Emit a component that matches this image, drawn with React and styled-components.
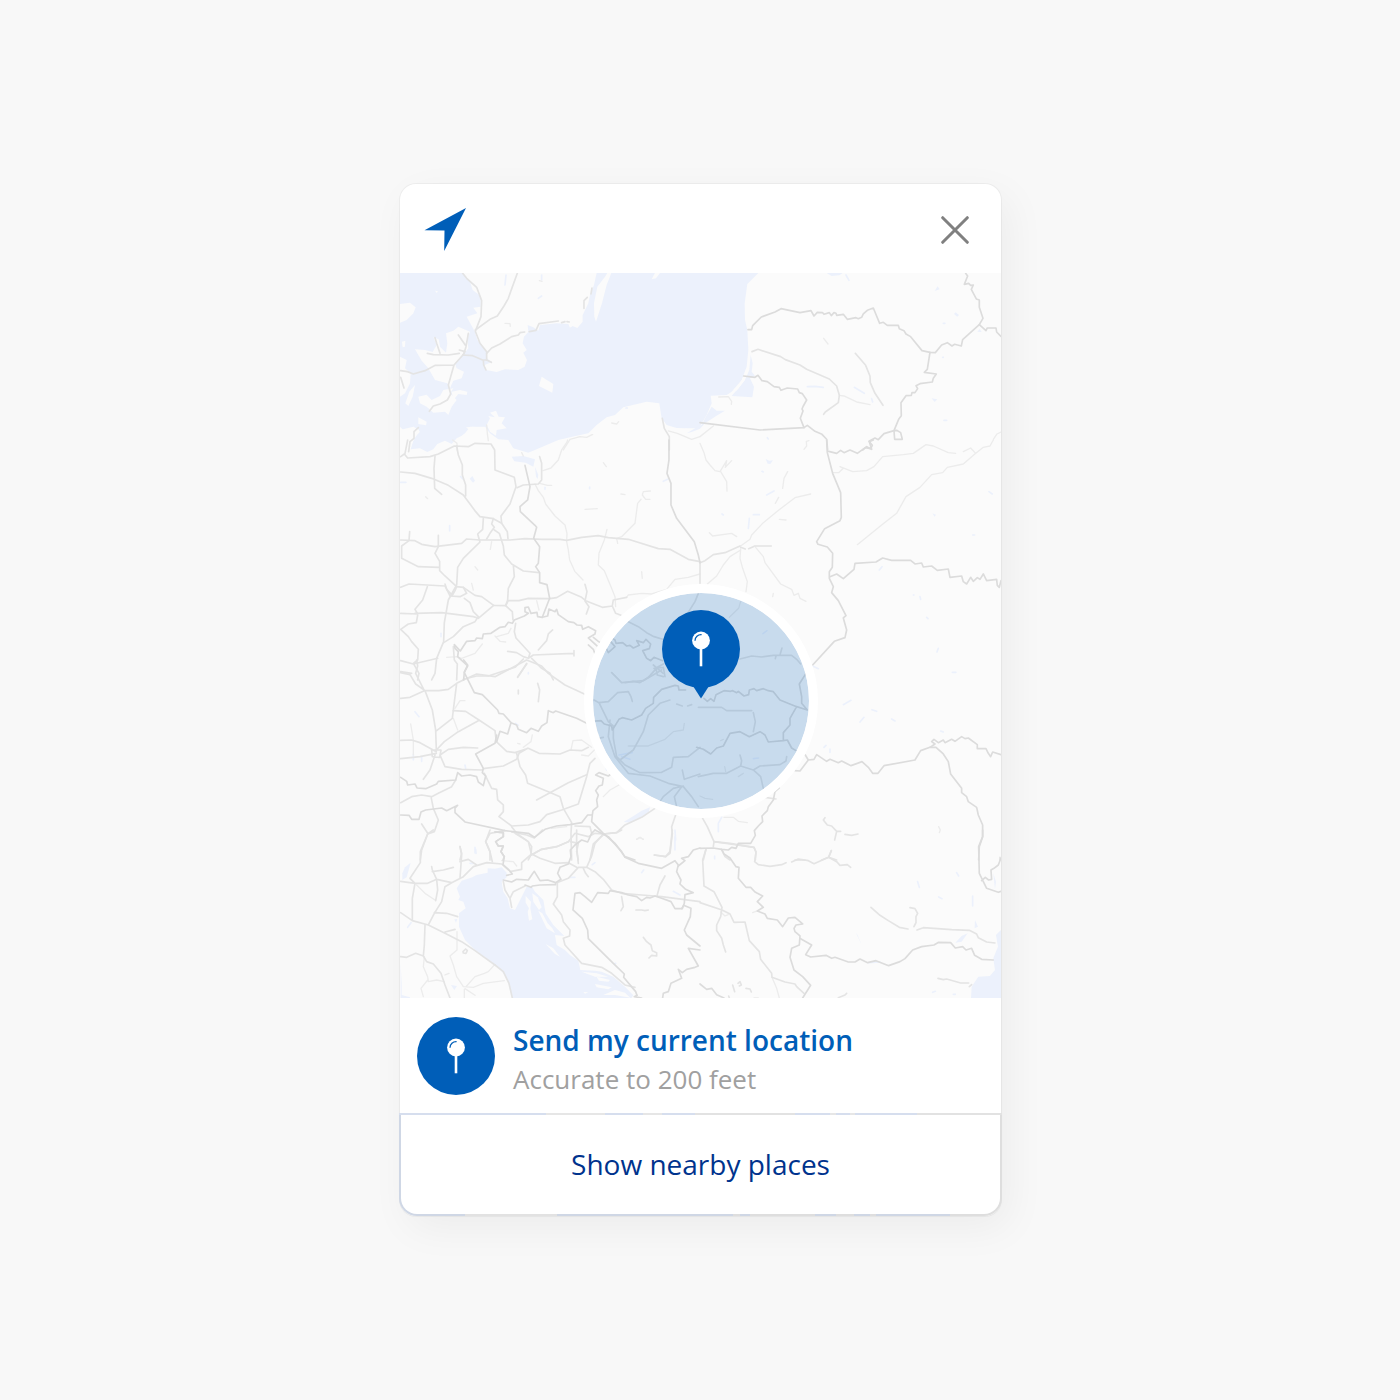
import React from 'react';
import styled, { createGlobalStyle } from 'styled-components';

const GlobalStyle = createGlobalStyle`
  * {
    box-sizing: border-box;
  }

  body {
    margin: 0;
    background: #f8f8f8;
    font-family: "Open Sans", "Noto Sans", sans-serif;
  }

  button {
    border: 0;
    padding: 0;
    background: none;
    font: inherit;
    cursor: pointer;
  }
`;

const Page = styled.div`
  display: flex;
  align-items: center;
  justify-content: center;
  min-height: 100vh;
  padding: 24px 24px 24px 25px;
`;

const Card = styled.main`
  width: 100%;
  max-width: 601px;
  border-radius: 16px;
  background: #fff;
  box-shadow: 0 0 0 1px rgba(0, 0, 0, 0.04), 8px 12px 40px rgba(0, 0, 0, 0.05);
`;

const Header = styled.header`
  display: flex;
  align-items: center;
  justify-content: space-between;
  padding: 24px 32px 22px 24px;
`;

const ArrowIcon = styled.svg`
  display: block;
  width: 43px;
  height: 43px;
  fill: #005eb8;
`;

const CloseButton = styled.button`
  width: 28px;
  height: 28px;

  svg {
    display: block;
    stroke: #808080;
    stroke-width: 3;
    stroke-linecap: round;
  }
`;

const MapArea = styled.section`
  position: relative;
  background: #fbfbfb;
`;

const MapDrawing = styled.svg`
  display: block;
  width: 100%;
  height: auto;
  fill: none;
  stroke-linejoin: round;
  stroke-linecap: round;

  .water {
    fill: #ecf1fc;
  }

  .land {
    fill: #fbfbfb;
  }

  .border {
    stroke: #dcdcdc;
    stroke-width: 5;
  }

  .road {
    stroke: #e4e4e4;
    stroke-width: 5;
  }

  .minor {
    stroke: #ececec;
    stroke-width: 4;
  }

  .stream {
    stroke: #ecf1fc;
    stroke-width: 5;
  }
`;

const Accuracy = styled.div`
  position: absolute;
  top: 59%;
  left: 50%;
  display: flex;
  justify-content: center;
  width: 234px;
  height: 234px;
  padding-top: 17px;
  border: 9px solid #fff;
  border-radius: 50%;
  background: rgba(0, 94, 184, 0.2);
  background-clip: padding-box;
  transform: translate(-50%, -50%);
`;

const Badge = styled.svg`
  display: block;
  flex: none;
  width: 78px;
  height: ${props => (props.$tail ? '89px' : '78px')};
`;

const LocationButton = styled.button`
  display: flex;
  align-items: center;
  gap: 18px;
  width: 100%;
  padding: 16px 17px 15px;
  text-align: left;
`;

const LocationText = styled.span`
  display: flex;
  flex-direction: column;
  padding-top: 6px;
`;

const Title = styled.span`
  color: #005eb8;
  font-size: 28px;
  font-weight: 600;
  line-height: 40px;
`;

const Subtitle = styled.span`
  color: #a0a0a0;
  font-size: 26px;
  line-height: 38px;
`;

const PlacesButton = styled.button`
  display: block;
  width: calc(100% + 2px);
  margin: 0 -1px;
  padding: 29px 16px 30px;
  border: 2px solid transparent;
  border-radius: 0 0 18px 18px;
  background:
    linear-gradient(#fff, #fff) padding-box,
    linear-gradient(90deg, #d6deee 147px, #e6e6e6 147px 206px, #d6deee 206px 244px, #e6e6e6 244px 263px, #d6deee 263px 296px, #e2e2e2 296px 396px, #d6deee 396px 431px, #e6e6e6 431px 437px, #d6deee 437px 451px, #e6e6e6 451px 456px, #d6deee 456px 518px, #e2e2e2 518px) top / 100% 2px no-repeat border-box,
    linear-gradient(90deg, #cfd7e5 66px, #e2e2e2 66px 158px, #cfd7e5 158px 334px, #dedede 334px 341px, #cfd7e5 341px 351px, #dedede 351px 416px, #cfd7e5 416px 437px, #dedede 437px 455px, #cfd7e5 455px 471px, #dedede 471px 477px, #cfd7e5 477px 551px, #dedede 551px) border-box;
  color: #00338d;
  font-size: 28px;
  line-height: 40px;
`;

// Each tile is drawn on a 3x grid and placed at x, y of the map.
const tiles = [
  {
    x: -10,
    y: -103,
    water: [
      'M30 309H220L240 335 248 360 272 378 272 410 250 413 262 430 230 440 254 484 262 510 288 542 292 566 306 576 284 585 288 600 320 606 345 598 385 600 404 590 411 570 400 548 410 540 398 520 402 500 415 486 413 465 430 472 445 482 450 465 500 460 535 462 540 473 548 468 562 474 578 455 578 435 595 400 600 375 612 345 620 309H930V775L890 775 860 774 830 765 815 745 808 700 770 695 700 712 675 735 650 742 620 765 595 790 560 797 505 810 440 838 415 848 370 835 355 810 325 808 300 790 285 770 250 770 228 772 238 780 220 795 200 805 185 822 165 812 142 822 130 838 112 846 90 835 62 838 72 805 90 785 70 770 30 780Z',
    ],
    land: [
      'M664 309L650 345 636 400 618 455 613 440 612 400 622 350 645 320 652 309Z',
      'M455 620L490 642 487 668 447 648Z',
      'M785 328L795 309H810L798 325Z',
      'M30 402L60 398 77 412 70 430 50 450 30 458Z',
      'M36 515L46 512 45 530 38 532Z',
      'M75 538L105 540 128 546 140 525 130 502 146 508 150 530 168 548 172 520 168 490 190 482 205 470 240 485 232 510 235 535 215 560 195 580 200 595 222 605 215 625 190 632 180 655 172 640 135 630 115 595 95 572Z',
      'M30 560L50 570 45 595 62 610 60 640 45 670 30 680Z',
      'M85 680L110 674 125 690 150 678 160 660 190 655 180 670 200 690 185 710 175 735 165 725 130 728 110 710 90 700Z',
      'M185 665L210 660 232 665 230 675 205 672 190 690Z',
      'M75 645L68 680 55 708 46 700 58 665Z',
      'M85 742L110 755 108 766 85 762Z',
      'M30 770L45 785 70 770 88 780 70 812 60 840H30Z',
      'M290 765L300 745 295 738 315 742 300 728 318 722 326 740 345 742 335 760 350 775 320 780 318 797 300 785Z',
      'M225 790L240 770 285 772 300 795 310 810H200Z',
      'M135 362L144 364 140 369Z',
    ],
    stream: ['M348 315L345 345', 'M445 385L455 378', 'M455 315V330', 'M708 714H712'],
    border: [],
    road: [
      'M218 310L230 325 260 352 275 392 273 440 256 484 270 520 290 545 290 570 304 577',
      'M382 310L362 365 355 385 342 408 322 438 300 448 256 480',
      'M290 550L305 534 330 522 365 500 385 495 390 488 404 486M418 485L438 481 447 461 505 453M515 458L525 455M531 455L538 456',
      'M218 555L248 557 278 570 290 570M280 570L281 585 288 600',
      'M32 602L52 605 70 612 105 602 136 586 192 585 218 556 225 545 208 540M192 585L175 645 182 672 172 690 150 702 130 708 118 724',
      'M32 622L42 654M85 773L72 785 72 805 60 815 56 845',
      'M112 550L130 554 175 555 208 550M135 503L140 520 150 550M235 490L228 530 222 550M205 495L228 528',
      'M606 354L603 372M592 382L582 392 582 415',
      'M817 745L823 775 838 800 838 840',
    ],
    minor: ['M345 460L360 461 361 469M448 332L456 334', 'M520 840L540 808 570 800 590 802 605 795M605 794H608M665 759L680 762 686 755M835 783L862 790 905 808 930 800', 'M290 765L292 790 295 812M188 810L201 820 201 840'],
  },
  {
    x: 300,
    y: -103,
    water: [
      'M-2 309H175L142 342 134 400 135 450 142 480 145 540 140 590 125 630 95 665 80 675 32 677 35 700 20 735 -2 772Z',
      'M152 555L158 580 155 605 165 618 150 625 162 650 157 682 95 678 115 655 135 630 148 600Z',
      'M0 776L15 745 35 710 50 722 75 722 45 740 15 760Z',
      'M-40 790L-10 772 10 762 0 776 -25 786Z',
      'M380 309H428L418 316 395 318Z',
      'M704 363L713 349 719 358Z',
      'M762 432L767 427 777 435 772 440Z',
      'M832 485L839 477 845 486Z',
      'M695 685L712 688 704 696Z',
    ],
    land: ['M134 615L120 640 100 660 110 662 133 632Z'],
    stream: ['M438 315L447 331', 'M322 650L345 649 370 652', 'M463 652L493 670', 'M515 686L518 696', 'M730 460H735M728 562H730M732 751H740M202 803L205 807'],
    border: [
      'M144 479H155L158 467 184 441 225 426 243 416 300 428 333 422 342 438 352 427 368 428 372 433 388 428 394 437 402 428 408 430 410 436 430 433 442 448 468 443 475 446 485 442 490 432 502 421 520 414 539 460 550 457 562 466 595 466 598 476 612 482 618 492 632 500 666 542 690 547 706 548 725 525 742 518 756 528 764 523 784 528 788 509 838 464 849 445 838 412 838 390 829 387 814 358 820 345 812 346 806 340 793 343 803 318 797 310',
      'M838 464L858 482 862 474 888 474 890 486 903 499',
      'M690 547L682 598 673 607 709 612 700 625 697 636 660 641 648 647 653 656 645 668 636 668 634 676 618 677 603 698 604 737 596 748 582 782 552 791 535 809 525 804 507 814 517 826 512 836 497 833 488 840',
      'M582 782L584 808 607 808 602 788 590 781Z',
      'M131 618L165 622 174 616 186 632 202 635 222 650 238 652 243 661 262 654 293 657 298 668 307 671 320 690 310 708 306 717 309 723 301 745 312 773 180 780 0 758',
      'M312 773L322 766 345 784 366 793 380 808 383 840',
    ],
    road: ['M156 545L174 538 242 560 256 569 300 585 320 598 388 627 410 648 418 676 415 698 376 726 371 733', 'M466 550L497 586 510 618 511 638 525 670 549 706'],
    minor: ['M418 676L432 678 470 696 510 704', 'M371 505L384 522', 'M56 681L85 680 95 694 94 703', 'M0 800L40 768M327 812L319 814 320 828 312 838M903 786L891 792 880 808'],
  },
  {
    x: -5,
    y: 167,
    water: ['M350 50L385 48 420 58 415 80 392 68 358 64Z', 'M224 116L232 108 240 122 234 128Z', 'M420 80L430 105 428 117 423 110Z'],
    land: [],
    stream: ['M17 127H33M197 110L205 118', 'M164 257V273', 'M450 142V148M584 141V146M805 124L818 118', 'M138 580V590'],
    border: [
      'M390 76L405 140 398 180 375 200 376 215 420 256 425 262 416 295 434 320 430 370 422 380 434 398 434 428 456 434 464 475 442 532 428 530 426 517 408 520 400 501 390 503 390 515 400 520 388 528 358 540 352 550 340 547 330 560 315 562 288 580 265 582 262 596 245 594 240 602 215 604 196 633 178 614 180 625 190 635 188 650 218 678 208 696 206 720',
      'M442 532L458 528 462 507 480 515 485 508 490 524 520 545 537 548 546 555 560 556 563 568 580 560 602 572 600 582 580 594 606 618',
      'M822 0L822 60 816 100 828 130 828 195 845 235 898 305 910 345 915 368',
    ],
    road: [
      'M17 50L28 42 38 54 105 50 130 42 178 18 220 20 240 10 288 12 299 30 300 90 358 112 363 140 345 192 318 228 320 250 337 275 339 296',
      'M17 96L60 100 110 115 160 136 205 165 242 215 255 230 295 236 320 250M120 48L117 85 119 145 140 163M185 18L190 45 202 75 202 105 212 135 212 168',
      'M17 300L60 302 80 313 120 320 200 310 215 297 255 300 345 300 390 296 440 298 495 298 515 301 560 292 610 287 640 293 700 298 790 326 825 328 880 358 915 365',
      'M265 236L263 268 248 282 255 306 205 355 188 382 185 435 160 480 148 548 146 605 125 655 120 700 110 720',
      'M130 286V320L120 340 134 364 134 392 150 408 185 440 205 442 240 466 260 470 296 496 332 497 340 482 372 482 400 475 464 476 485 473 518 454 560 472 572 482 622 502 652 498 662 520 678 526M652 498L655 480 695 472',
      'M295 236L290 252 298 262 285 280 275 297M298 270L313 280 325 318 328 345 350 372 385 393 432 398M355 375L358 410 340 445 338 480 332 497 352 515 354 540',
      'M44 275L42 302 20 318 20 355 70 380 132 382M17 442L42 432 150 438 165 468 195 470 215 460 205 442M97 440L83 480 60 508 68 522 17 520M60 520L140 518 235 530 250 535 296 496M208 475L225 488 235 515 250 530 240 545 205 560 175 590 146 608M68 525L64 548 40 552 17 568 40 590 50 605 70 628 68 660 55 670 72 700 68 720M17 662L55 672 128 655M17 695L50 700',
      'M366 143L385 135 430 132 440 120 440 70 434 50M38 0L30 40',
      'M338 634L365 638 385 650 400 655 405 640 363 594 358 575 362 550M430 630L455 602 460 582 473 570M400 655L415 645 535 640M537 632V648M368 711L395 672M410 655L440 685 465 700 475 720',
      'M175 620L178 660 187 672 185 720M205 718L245 708 280 708 305 700 360 682 385 657',
      'M570 433L576 455 570 483 582 500 574 522',
      'M150 432L155 448 172 466 180 452 185 440',
    ],
    minor: [
      'M444 92L468 84 490 60 500 30 515 8 518 0M434 130L458 136 470 136M420 132L430 152 445 172 452 192 480 228 510 255 516 280 515 305 520 330 524 360 540 395 564 420',
      'M636 268L628 300 612 340 610 375 628 392 648 440 660 470 662 500M695 472L700 465 740 460 770 462 815 448 840 418 880 412 915 402',
      'M766 153L745 155 742 165 752 178 765 178M738 178L728 190 720 250 680 290 665 295 668 310',
      'M155 652L185 650 200 655 240 640 262 612M300 588L315 604 332 606M305 590L340 580 348 565M425 482L432 510M240 380L248 390M230 430L235 450M290 305L286 328M740 395L742 415M570 208L607 206M678 162L690 164M625 68L634 80M380 38L385 48M92 170L98 176',
    ],
  },
  {
    x: 300,
    y: 167,
    water: ['M197 57L208 62 219 61 211 72 203 71Z', 'M697 220L708 224 704 230Z'],
    land: [],
    stream: ['M200 165L222 153M148 235L145 265M160 224H178M66 222L70 225M186 94L190 96', 'M867 155L877 162M818 285H824M538 390L546 380M640 465H642M660 470L662 478M680 532L684 536M715 625L711 636'],
    border: [
      'M380 0L382 38 398 100 422 158 424 232 420 242 374 266 350 305 354 313 382 321 398 340 397 382 388 395 388 415 400 440 395 458 415 482 438 527 430 534 440 570 435 593 403 604 338 675',
      'M386 34L410 40 422 31 432 38 450 30 472 40 500 20 515 28 508 5 520 0M390 410L410 402 430 416 462 388 465 370 528 366 548 354 575 361 632 361 645 372 665 369 670 381 695 378 712 391 745 387 750 412 785 408 790 425 800 432 812 412 820 424 832 413 840 418 850 402 860 422 890 418 892 436 898 442 903 422',
    ],
    road: ['M0 368L15 362 40 344 75 338 120 318M163 318H214', 'M122 322L136 327M146 326L160 320', 'M0 368V430'],
    minor: [
      'M122 318L150 298 155 285 190 248 230 215 285 173 332 162M122 326L120 355 128 385 142 425 138 455M122 330L90 350 70 375 50 408 22 432M165 320L190 350 195 368 242 432 275 448 282 466 295 460 300 475 318 484',
      'M400 98L416 98 430 85 420 80 458 95 500 92 522 80 548 50 610 44 640 40 678 14 700 18 745 38 767 40M472 314L545 255 590 220 618 170 660 142 695 104 728 98 742 82 790 72 822 44 850 22 870 18 880 0M790 35L812 24 825 38',
      'M0 10L12 38 18 60 30 75 45 92 60 95 80 62 76 82 95 62M62 95L80 125 81 153M263 95L252 115 248 145M236 172L226 190M28 278L38 288 95 280 110 290M238 238L258 240M218 470L220 460',
    ],
  },
  {
    x: 180,
    y: 307,
    water: [],
    land: [],
    stream: ['M549 161L561 152'],
    border: [
      'M92 172L105 180 108 190 128 188 140 198 150 196 160 204 178 196 170 182 190 188 198 178 212 192 208 206 188 212 200 235 212 242 222 232 248 242',
      'M25 195L40 208 45 222M40 172L55 184 75 198 85 218 105 200 92 185',
    ],
    road: [
      'M355 40L345 65 328 92 310 120M142 124L175 140 200 158 222 170 256 180',
      'M480 237L515 228 545 231 580 226 635 226 650 238 662 252M606 204L600 225M586 236L588 228',
      'M135 308L160 304 180 308 205 292 232 262 250 252M222 265L250 262M228 265L232 285 250 290M250 262L255 290',
    ],
    minor: ['M482 64L476 85 448 112M96 278L125 308'],
  },
  {
    x: -5,
    y: 387,
    water: ['M686 486L712 470 740 452 765 442 762 455 735 475 708 488Z'],
    land: [],
    stream: ['M55 282V300M80 290V304M210 315L212 325M362 190L370 196', 'M400 38V42M60 155L72 170', 'M240 562V578M840 510L842 540', 'M672 285L712 278M680 290L705 298M632 320L635 330'],
    border: [
      'M206 0L218 15 208 38 238 98 262 104 308 150 312 160 325 162 348 188 338 222 315 214 305 245',
      'M348 188L365 195 370 208 395 218 408 205 430 214 440 198 456 188 460 152 475 158 482 153 545 175 575 190M600 183L618 182 628 192 650 198 652 210 672 178 682 173 710 180 740 165 752 145 775 130 776 112 800 88 840 76 850 78 852 90 872 90',
      'M17 352L35 364 38 375 60 372 66 384 92 386 125 372 130 364 182 360 188 338 200 348 225 345 245 350 250 366 265 377 272 348 262 338 265 325 242 282 300 250 305 225',
      'M17 465L42 466 50 478 72 478 78 456 92 450 140 444 155 452 188 436 180 445 180 458 210 486 330 512 400 520 418 532 450 508 485 498 525 494 560 488 578 465 592 465 594 452 608 440 605 420 610 405 602 392 612 378 622 375 625 355 602 345 612 338 640 348 648 342',
      'M592 465L590 485 625 520 660 550 690 590 720 600',
      'M300 516L325 518 325 530 302 545 310 558 325 558 318 575 328 590 324 600',
    ],
    road: [
      'M17 115L45 112 88 92 62 40 68 18 65 0M17 38L45 44 62 72 90 92 112 150 122 210 124 270M90 92L132 92 160 88 185 70 205 60 245 42 300 50 395 0 440 18 460 40 510 75 568 102M185 70L175 150 172 175 125 212',
      'M175 152L212 154 252 180 300 212 304 245 335 274 360 278 400 265 432 280 495 282 525 270 560 272 580 262M124 270L148 245 190 215 250 182M135 285L160 268 205 262 248 264M124 275L75 248 50 240 17 241M124 280L75 290 17 296M135 285L150 320 200 328 260 330 270 325 325 318 365 298 372 280 398 265M120 285L105 330 85 358M110 270H138L134 292 112 290Z',
      'M365 280L375 320 392 345 398 370 460 395 495 410 505 445 530 488 528 520 530 600M268 340L290 385 305 388 308 420 325 435 325 455 312 470 350 498 400 495 435 485 455 464 500 450 550 432 560 400 575 350 585 310 600 295',
      'M425 420L465 398 520 368 575 344M182 360L170 380 130 400 110 410 80 405 50 410 17 428M108 410L115 445 130 480 118 515 98 522 80 570 76 600M80 492L98 520',
      'M350 500L365 520 400 545 410 560 408 585 440 568 485 560 520 545 540 520 580 530 600 520 625 522 665 518 690 495 740 472 780 445M408 585L400 600M625 525L595 552 585 600M330 512L285 520 272 545 285 575 285 600',
      'M195 560L200 580 195 600M540 498L585 500 590 520M526 545L550 550 545 575 550 600M597 120L612 128 640 125 668 98 700 95 708 110 712 124M612 128L640 185 655 198 655 235 665 290 690 315 735 338 800 337 830 322 835 292 880 290 915 262M645 180L640 230 660 290 700 340 765 348 820 370 865 380M675 300L715 270 745 215 760 165 795 130 825 120M860 380L838 410 845 440M865 380L890 410 910 440M865 378L835 385 805 410 785 440M862 330L868 358 915 342M680 68L650 38M680 68L745 62 800 30M775 15L805 40',
      'M600 195L610 235 625 232M842 465L830 500 832 520 825 580 812 590 778 585M370 90V102M428 70L434 90 430 125M368 52L395 10M845 132L862 138M878 138L890 134',
    ],
    minor: ['M175 175L188 210M180 145L195 122 210 122M412 225L408 245 385 262M528 270L534 242 560 240 590 262M560 285L580 288 598 270M368 250L375 252M47 192L55 240 55 285M625 410L645 390 672 375M725 538L735 532 745 538M700 258L760 258 810 238 835 215 865 210 868 190M470 505L515 500'],
  },
  {
    x: 300,
    y: 387,
    water: [],
    land: [],
    stream: ['M430 134L453 121M516 149L530 154M480 186L492 172M575 177L585 183M722 213L730 216M372 262L378 256M390 267V277M757 37H768M338 18L355 26M160 296L176 294M55 515L55 490 65 472'],
    border: [
      'M12 115L22 124 32 116 42 124 48 104 72 92 92 94 98 92 110 98 115 94 132 108 146 104 148 90 162 86 170 92 190 86 205 92 220 95 240 120 290 140 322 150 305 130 305 110 298 72 318 40M290 140L270 175 270 195 250 218 250 242 205 246 195 225 180 215 148 230 120 215 90 220 70 258 50 264 32 282 10 268 -10 262M250 242L262 240 275 264 288 272',
      'M285 332L300 333 325 300 316 285M325 300L342 298 350 284 380 304 390 298 415 308 425 303 453 317 486 305 505 322 518 340 534 340 552 317 645 300 662 272 690 262 705 252 695 245 702 238 715 248 730 240 735 248 755 238 765 244 785 230 795 236 805 234 832 254 832 266 858 266 865 280 872 290 878 276 903 284',
      'M690 262L708 262 730 282 745 305 752 342 785 385 785 398 800 410 805 425 830 442 835 465 848 495 848 530 838 560 836 600',
      'M238 384L225 395 220 420 205 440 202 452 186 468 188 485 175 498 163 512 166 526 152 550 115 550 108 565 95 562 85 570 65 568 40 564 0 565',
    ],
    road: [
      'M-5 142L65 142 80 152 130 152 155 152M-5 350L40 340 80 340 122 318 160 330 180 318 240 314 258 303 260 290M122 318L125 302 120 285M160 330L182 350 190 385M160 158L166 185 160 215',
      'M8 475L22 500 42 545 40 560M42 545L90 550 162 562 168 576 166 600M65 570L75 590 90 600M18 568L10 600M195 412L228 417',
      'M375 473L370 480 382 495 395 498 410 514 404 540M410 514L422 514M435 523L455 526 474 522M394 572L386 592 365 600M386 592L410 600M285 600L315 600',
      'M900 592V600',
    ],
    minor: ['M72 472L100 472 115 484 142 488M716 500L721 510 718 518M74 320L77 335M115 350L130 340M62 242L70 238', 'M0 408L15 415 38 418'],
  },
  {
    x: -5,
    y: 557,
    water: [
      'M185 175L200 152 232 142 245 135 278 128 278 115 300 116 320 112 335 128 335 142 320 155 325 185 338 205 345 235 360 240 378 205 395 170 412 172 420 185 430 195 445 210 452 250 475 285 508 318 480 315 485 345 510 360 525 375 550 392 556 420 600 422 620 425 655 440 690 470 715 496 708 506H352L340 460 325 430 295 400 240 360 210 330 192 290 192 250 212 235 205 215 190 210 195 200Z',
      'M22 150L22 130 30 112 47 98 35 142Z',
      'M17 400L20 465 20 495 45 502 45 506H17Z',
      'M178 268L187 267 183 278ZM168 465L186 468 178 480Z',
    ],
    land: ['M392 198L408 215 406 235 412 268 402 272 398 245 402 235 392 218Z', 'M412 190L428 202 440 232 432 240 415 215Z', 'M430 242L442 250 458 280 472 295 480 310 455 295Z', 'M452 342L475 355 495 380 480 372Z', 'M560 425L605 430 640 440 600 440ZM605 440L645 450 640 455 612 452ZM600 462L650 472 640 478 605 472ZM625 495L660 480 690 488 706 503 660 495ZM565 486L580 487 570 491Z'],
    stream: ['M225 100H235M242 58L243 70M840 20V60M835 184L855 195M592 104L600 98M660 400H662M740 128L746 120M38 292L48 278M525 142H540'],
    border: [
      'M300 6L325 8 325 20 302 35 310 48 325 48 318 65 328 80 324 104 342 120 352 132 335 136M325 150L350 156 365 148 400 150 412 132 418 124 435 152 458 150 482 158 498 148 488 130 495 112 520 102 528 80 526 60 540 45 560 30 578 36 590 10 600 0M390 165L408 172 412 168 435 165 482 164',
      'M600 0L640 20 680 65 690 82 730 100 800 115 840 92 850 105 845 125 858 150 855 162 872 178 895 188 870 194 868 220 862 236 840 236 828 215 800 205 780 198 765 204 755 202 740 212 725 200 700 195 680 188 645 182 640 190 608 188 590 217 570 200 555 188 540 190 534 240 562 265 578 300 580 326 655 400 688 432 686 442 722 485 726 496',
      'M850 108L870 92 860 85 880 80 895 60 915 54M860 236L866 226 888 235 886 260 868 300 875 315 915 348M726 496L718 500 740 504M915 360L880 355 910 408 900 412 875 418 862 428 850 418 860 445 828 460 820 485 805 490 803 504',
    ],
    road: [
      'M17 154L60 160 98 160 125 148 170 158 205 140 235 110 275 98 320 102 340 120M60 160L52 205 52 272 17 248M52 272L100 285 150 310 200 335 240 362 300 405M115 0L98 12 76 65 76 98 45 145 60 160M125 148L112 120 110 110M112 125L145 120 175 112M195 50L200 75 195 145M195 95L220 88 245 105M125 148L128 180 122 212M170 158L150 170 140 215 118 250 100 285M118 248L155 250 188 260M150 306L180 298M90 285L88 345 85 378 62 370 35 382 17 380M85 378L95 395 115 402 138 430 150 465 165 504',
      'M300 405L325 425 342 460 352 504M325 155L330 180 345 205 350 232M345 205L355 185 390 168M487 158L487 200 475 222 500 255 505 275 525 300 524 318 505 325 510 345 560 400 620 412 650 430 690 465 720 472',
      'M482 160L520 145 550 112 575 112 600 125 625 148 650 180 680 190 740 195 800 200 915 215M787 194L795 165 810 138M545 112L520 98 480 100 435 85 410 72 380 98 380 118 345 125M410 75L440 58 485 50 520 35M575 112L590 78 600 40 625 12M550 100L545 50 545 0M565 115L572 130 580 140M360 10L400 35 410 75M272 35L285 65 292 95M285 0L272 35M350 6L395 15 418 24 442 0M625 12L665 8 680 0',
      'M745 322L755 335 768 345 772 362 785 368 785 378 770 376 762 384M680 200L685 230 678 242M723 240L740 240 750 242 760 240M832 0L825 65 812 80 778 75',
      'M204 365L212 357 217 362 213 370 205 369Z',
    ],
    minor: ['M65 165L90 190 120 210M320 92L355 95 365 108M186 305V360L165 378 175 405 185 440 205 470 235 472 265 460 328 452M88 380L85 410 98 440 100 455 125 450 148 455M208 478V506M210 476L240 496M98 450L78 475 85 500M298 405L280 425 268 430M268 430L240 440 215 468M725 28L735 22 745 28M150 435L162 430'],
  },
  {
    x: 300,
    y: 557,
    water: ['M903 300L888 315 894 350 880 385 885 420 870 438 835 440 815 470 813 506H903Z', 'M880 130L888 155 885 178Z', 'M825 270L834 290 824 295Z', 'M766 338L785 318 803 310 785 335Z', 'M467 307L473 316 485 345Z'],
    land: [],
    stream: ['M818 198V228M653 155L658 172M770 128L776 138M716 201L726 206M44 78V86M698 487L706 484M760 493H766M505 398L540 396'],
    border: [
      'M65 58L72 72 90 84 108 110 117 112 115 145 138 172 152 172 165 186 188 198 172 215 190 232 172 243 195 252 202 265 232 270 248 290 265 264 285 262 308 282 288 285 282 295 285 305 300 318 298 345 275 355 270 382 282 420 308 440 332 466 308 504',
      'M302 326L335 345 317 374 332 381 378 376 395 385 405 382 445 396 465 396 480 387 503 398 528 392 566 407 600 395 615 386 638 360 665 350 702 345 716 337 752 338 766 354 788 350 798 360 815 355 824 376 845 388 880 390',
      'M848 0L848 20 836 50 838 130 860 175 895 187 903 184M845 152L856 142 866 150 875 148 873 120 882 115 895 105 903 84',
      'M0 462L20 478 35 475 50 494 72 504',
    ],
    road: [
      'M42 35L90 42 162 52 168 66 164 95 175 104 210 109 245 104 258 98M275 96L295 87 325 92 342 101 386 82 410 95 420 106 442 104 452 112M386 82L394 62M18 58L8 90 12 168 42 185 66 232 62 260 50 285 50 302 65 325 70 345 77 366M0 218L66 240 90 252 102 277 135 276 148 332 178 365 182 388 215 430 216 442 255 456 285 462 290 470 312 490',
      'M513 232L540 256 565 272 598 292 624 297M642 290L648 278 648 260 653 250 645 236 630 233M651 300L670 293 755 299 808 301 830 312 835 323 860 336 885 339M714 445L730 449 740 447 782 459 806 459M808 470L815 464',
      'M98 465L104 485M114 460L120 455 124 465 118 468M86 498L88 504M138 475L150 477 154 486M415 503L435 495 440 490',
    ],
    minor: ['M216 442L230 475 238 504M62 246L75 258 85 254M158 248L172 243M162 504L175 504'],
  },
];

const PinBadge = ({ tail }) => (
  <Badge $tail={tail} viewBox={tail ? '0 0 78 89' : '0 0 78 78'} aria-hidden="true">
    <circle cx="39" cy="39" r="39" fill="#005eb8" />
    {tail && <path d="M31 76L39 88.5L47 76Z" fill="#005eb8" />}
    <circle cx="39" cy="30.5" r="8.9" fill="#fff" />
    <path d="M39 38V56.3" stroke="#fff" strokeWidth="2.6" />
    <path d="M33 30.8A6.1 6.1 0 0 1 39.6 24.6" fill="none" stroke="#005eb8" strokeWidth="1.3" />
  </Badge>
);

const kinds = ['water', 'land', 'stream', 'minor', 'road', 'border'];

const RegionMap = () => (
  <MapDrawing viewBox="0 0 601 725" role="img" aria-label="Map">
    {kinds.map(kind =>
      tiles.map(tile => (
        <g key={`${kind}-${tile.x}-${tile.y}`} transform={`translate(${tile.x} ${tile.y}) scale(0.3333)`}>
          {tile[kind].map(d => (
            <path key={d} className={kind} d={d} />
          ))}
        </g>
      ))
    )}
  </MapDrawing>
);

const App = () => {
  return (
    <>
      <GlobalStyle />
      <Page>
        <Card>
          <Header>
            <ArrowIcon viewBox="0 0 43 43" aria-hidden="true">
              <path d="M42 0L0.5 22.3L20.5 22.6L20.2 43Z" />
            </ArrowIcon>
            <CloseButton aria-label="Close">
              <svg width="28" height="28" viewBox="0 0 28 28">
                <path d="M1.7 1.7L26.3 26.3M26.3 1.7L1.7 26.3" />
              </svg>
            </CloseButton>
          </Header>

          <MapArea>
            <RegionMap />
            <Accuracy>
              <PinBadge tail />
            </Accuracy>
          </MapArea>

          <LocationButton>
            <PinBadge />
            <LocationText>
              <Title>Send my current location</Title>
              <Subtitle>Accurate to 200 feet</Subtitle>
            </LocationText>
          </LocationButton>

          <PlacesButton>Show nearby places</PlacesButton>
        </Card>
      </Page>
    </>
  );
};

export default App;
